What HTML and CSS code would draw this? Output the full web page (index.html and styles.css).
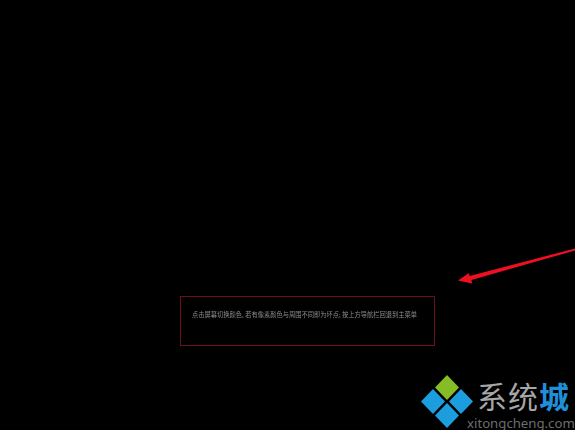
FILE: index.html
```html
<!DOCTYPE html>
<html lang="zh-CN">
<head>
<meta charset="utf-8">
<title>坏点检测</title>
<link rel="stylesheet" href="styles.css">
</head>
<body>
<main class="screen">
  <section class="notice">
    <p class="notice-text">点击屏幕切换颜色, 若有像素颜色与周围不同即为坏点; 按上方导航栏回退到主菜单</p>
  </section>
</main>
<svg class="arrow" viewBox="0 0 120 40" aria-hidden="true">
  <path class="arrow-shape" d="M0 35.5 L11 28 L11.5 31 L117 3.5 L117 5.5 L13.5 35 L14 38.5 Z"/>
</svg>
<aside class="logo">
  <svg class="logo-mark" viewBox="0 0 54 54" aria-hidden="true">
    <path class="leaf" d="M26 0 L38 12.5 L26 25 L14 12.5 Z"/>
    <path class="sky" d="M12 14 L24 26.5 L12 39 L0 26.5 Z"/>
    <path class="sky" d="M40 14 L52 26.5 L40 39 L28 26.5 Z"/>
    <path class="sky" d="M26 28 L38 40.5 L26 53 L14 40.5 Z"/>
  </svg>
  <div class="logo-words">
    <div class="logo-name">系统<span class="logo-accent">城</span></div>
    <div class="logo-url">xitongcheng.com</div>
  </div>
</aside>
</body>
</html>
```
FILE: styles.css
```css
html, body {
  margin: 0;
  height: 100%;
  background: #000;
  overflow: hidden;
}
.screen {
  box-sizing: border-box;
  height: 430px;
  padding: 296px 140px 0 180px;
  font-family: "Noto Sans CJK SC", "Liberation Sans", sans-serif;
}
.notice {
  box-sizing: border-box;
  height: 50px;
  border: 1px solid #6d0f1e;
  padding: 11px 0 0 11px;
}
.notice-text {
  margin: 0;
  font-size: 6.25px;
  line-height: 14px;
  color: #8c8c8c;
  white-space: nowrap;
  filter: blur(0.3px);
}
.arrow {
  position: absolute;
  left: 458px;
  top: 245px;
  width: 120px;
  height: 40px;
}
.arrow-shape { fill: #ee1020; }
.logo {
  position: absolute;
  left: 421px;
  top: 375px;
  width: 154px;
  height: 55px;
  display: flex;
}
.logo-mark {
  width: 54px;
  height: 54px;
  flex: none;
}
.leaf { fill: #86bc25; }
.sky { fill: #1c9ede; }
.logo-words {
  margin-left: -8px;
  font-family: "Noto Sans CJK SC", "Noto Sans", sans-serif;
}
.logo-name {
  margin: 7px 0 0 10px;
  font-size: 30px;
  line-height: 26px;
  letter-spacing: 1px;
  color: #a6a6a6;
  white-space: nowrap;
}
.logo-accent { color: #1f8fd8; font-weight: 700; }
.logo-url {
  margin-top: 8px;
  font-family: "Noto Sans", sans-serif;
  font-size: 13.2px;
  line-height: 14px;
  color: #6e6e6e;
  white-space: nowrap;
}
```
